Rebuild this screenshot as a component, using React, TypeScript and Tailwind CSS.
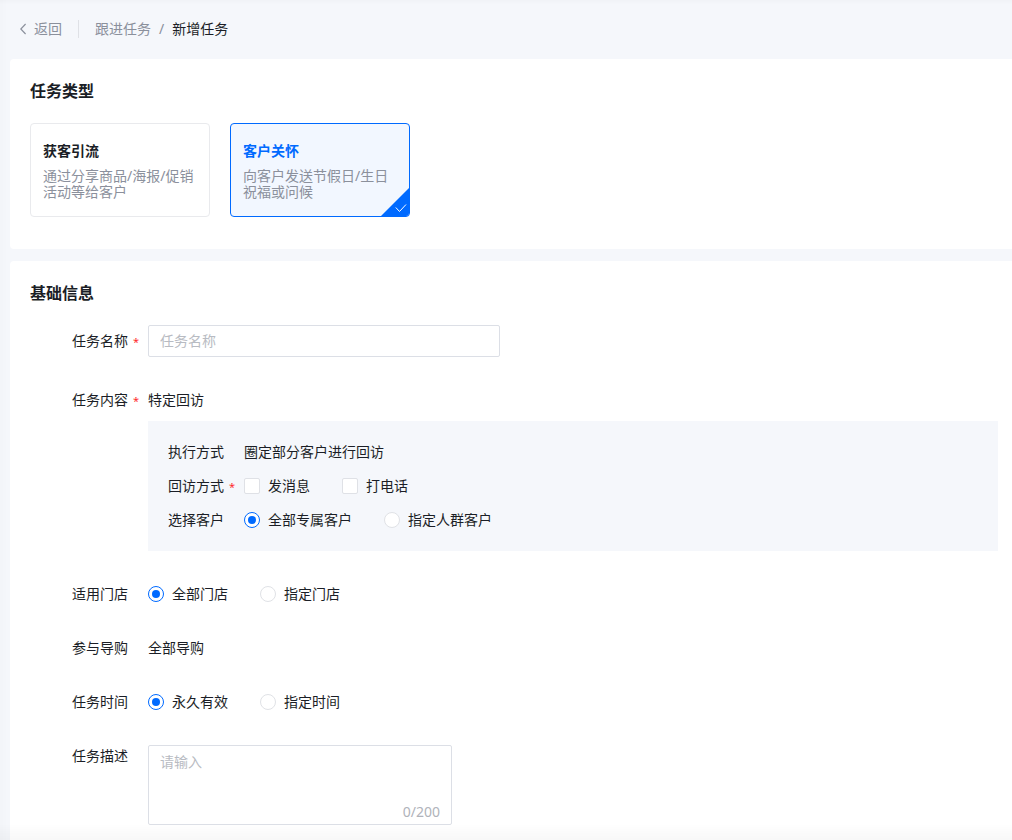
import { useState, type ReactNode } from 'react';

const cards = [
  { id: 'acquire', title: '获客引流', desc: '通过分享商品/海报/促销活动等给客户' },
  { id: 'care', title: '客户关怀', desc: '向客户发送节假日/生日祝福或问候' },
];

function Heading({ children }: { children: ReactNode }) {
  return <h2 className="mb-5 text-base leading-6 font-bold">{children}</h2>;
}

function Caption({ text, required, htmlFor }: { text: string; required?: boolean; htmlFor?: string }) {
  const body = (
    <>
      {text}
      {required && <span className="ml-[5px] text-[11px] leading-none text-[#ff2b2b]">*</span>}
    </>
  );
  return htmlFor ? (
    <label htmlFor={htmlFor} className="w-[76px] shrink-0">{body}</label>
  ) : (
    <span className="w-[76px] shrink-0">{body}</span>
  );
}

function Row({ children, top }: { children: ReactNode; top?: boolean }) {
  return <div className={top ? 'flex items-start' : 'flex items-center'}>{children}</div>;
}

function RadioRow({ label, name, options }: { label: string; name: string; options: string[] }) {
  const [value, setValue] = useState(options[0]);
  return (
    <Row>
      <Caption text={label} />
      <div role="radiogroup" aria-label={label} className="flex flex-wrap gap-x-8">
        {options.map((option) => (
          <label key={option} className="flex items-center gap-2">
            <input
              type="radio"
              name={name}
              checked={value === option}
              onChange={() => setValue(option)}
              className="grid size-4 appearance-none place-items-center rounded-full border border-[#e0e2e6] bg-white before:size-2 before:rounded-full checked:border-[#006aff] checked:before:bg-[#006aff]"
            />
            {option}
          </label>
        ))}
      </div>
    </Row>
  );
}

export default function App() {
  const [type, setType] = useState('care');
  const [description, setDescription] = useState('');

  return (
    <div className="flex min-h-screen flex-col bg-[#f5f7fb] pl-2.5 font-['Noto_Sans','Noto_Sans_CJK_SC',sans-serif] text-sm leading-[22px] text-[#1b1e26]">
      <header className="flex h-[59px] items-center pb-0.5 pl-2.5 text-[#8b909c]">
        <a href="#back" className="flex items-center gap-2">
          <svg width="6" height="12" viewBox="0 0 6 12" fill="none" stroke="currentColor" strokeWidth="1.2" aria-hidden="true">
            <path d="M5.6 1 .8 6l4.8 5" />
          </svg>
          返回
        </a>
        <span className="mx-4 h-[18px] w-px bg-[#dfe1e6]" />
        <nav className="flex gap-2" aria-label="breadcrumb">
          <a href="#tasks">跟进任务</a>
          <span>/</span>
          <span className="text-[#1b1e26]">新增任务</span>
        </nav>
      </header>

      <section className="mb-3 rounded-l-sm bg-white px-5 pt-5 pb-8">
        <Heading>任务类型</Heading>
        <div className="flex flex-wrap gap-5">
          {cards.map((card) => {
            const active = card.id === type;
            return (
              <button
                key={card.id}
                type="button"
                aria-pressed={active}
                onClick={() => setType(card.id)}
                className={
                  active
                    ? 'relative w-[180px] overflow-hidden rounded border border-[#006aff] bg-[#f2f7ff] px-3 py-4 text-left'
                    : 'relative w-[180px] overflow-hidden rounded border border-[#e9eaed] bg-white px-3 py-4 text-left'
                }
              >
                <span className={active ? 'block font-bold text-[#006aff]' : 'block font-bold'}>{card.title}</span>
                <span className="mt-1.5 block leading-4 text-[#8b909c]">{card.desc}</span>
                {active && (
                  <svg className="absolute right-0 bottom-0" width="28" height="28" viewBox="0 0 28 28" fill="none" aria-hidden="true">
                    <path d="M28 0v28H0z" fill="#006aff" />
                    <path d="m14.8 19.5 3.7 4 6.5-7" stroke="#fff" />
                  </svg>
                )}
              </button>
            );
          })}
        </div>
      </section>

      <section className="grow rounded-tl-sm bg-white pt-5 pr-3.5 pb-[15px] pl-5">
        <Heading>基础信息</Heading>
        <form className="flex flex-col gap-8 pl-[42px]">
          <Row>
            <Caption text="任务名称" required htmlFor="task-name" />
            <input
              id="task-name"
              placeholder="任务名称"
              className="h-8 w-[352px] rounded-xs border border-[#dcdfe6] px-[11px] pb-0.5 placeholder:text-[#b8bbc2]"
            />
          </Row>

          <Row top>
            <Caption text="任务内容" required />
            <div className="min-w-0 grow">
              <p>特定回访</p>
              <div className="mt-2.5 flex flex-col gap-3 bg-[#f5f7fb] p-5">
                <Row>
                  <Caption text="执行方式" />
                  <span>圈定部分客户进行回访</span>
                </Row>
                <Row>
                  <Caption text="回访方式" required />
                  <div className="flex flex-wrap gap-x-8">
                    {['发消息', '打电话'].map((option) => (
                      <label key={option} className="flex items-center gap-2">
                        <input
                          type="checkbox"
                          className="size-4 appearance-none rounded-xs border border-[#dfe1e6] bg-white checked:border-[#006aff] checked:bg-[#006aff]"
                        />
                        {option}
                      </label>
                    ))}
                  </div>
                </Row>
                <RadioRow label="选择客户" name="customers" options={['全部专属客户', '指定人群客户']} />
              </div>
            </div>
          </Row>

          <RadioRow label="适用门店" name="stores" options={['全部门店', '指定门店']} />
          <Row>
            <Caption text="参与导购" />
            <span>全部导购</span>
          </Row>
          <RadioRow label="任务时间" name="period" options={['永久有效', '指定时间']} />

          <Row top>
            <Caption text="任务描述" htmlFor="task-desc" />
            <div className="relative w-[304px]">
              <textarea
                id="task-desc"
                placeholder="请输入"
                maxLength={200}
                value={description}
                onChange={(e) => setDescription(e.target.value)}
                className="block h-20 w-full resize-none rounded-xs border border-[#dcdfe6] px-[11px] py-[5px] placeholder:text-[#b8bbc2]"
              />
              <span className="absolute right-3 bottom-0.5 text-[#b0b3ba]">{description.length}/200</span>
            </div>
          </Row>
        </form>
      </section>
      <div className="pointer-events-none fixed inset-x-0 bottom-0 h-4 bg-linear-to-t from-black/3 to-transparent" />
      <div className="pointer-events-none fixed inset-x-0 top-0 h-1 bg-linear-to-b from-black/2 to-transparent" />
      <div className="pointer-events-none fixed inset-y-0 left-0 w-2 bg-linear-to-r from-black/1 to-transparent" />
    </div>
  );
}
